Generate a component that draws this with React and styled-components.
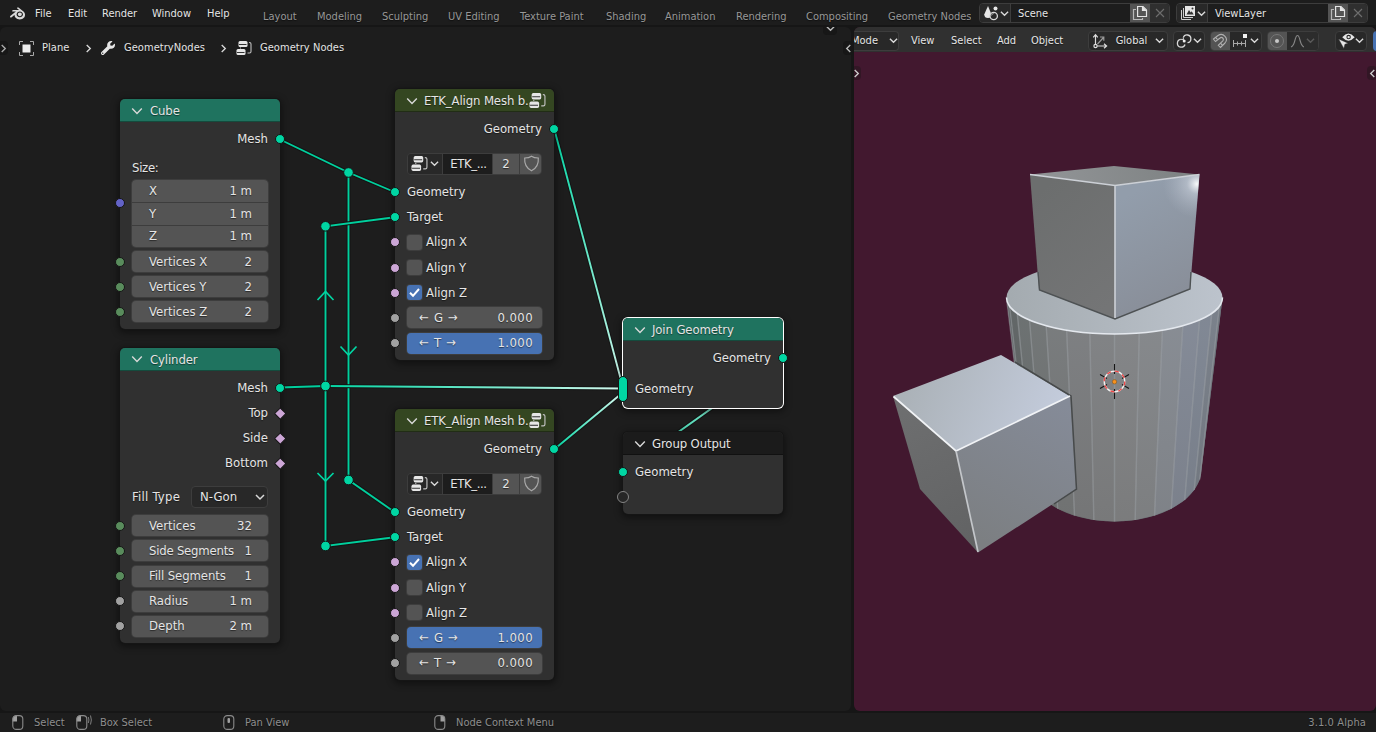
import React from "react";
import styled, { createGlobalStyle, css } from "styled-components";
import { SiBlender } from "react-icons/si";
import { FaWrench } from "react-icons/fa";

const C = {
  gap: "#161616",
  panel: "#1d1d1d",
  header: "#303030",
  node: "#303030",
  field: "#545454",
  menu: "#282828",
  outline: "#3d3d3d",
  blue: "#4772b3",
  text: "#e5e5e5",
  dim: "#989898",
  geo: "#00d6a3",
  int: "#598c5c",
  float: "#a1a1a1",
  bool: "#cca6d6",
  vector: "#6363c7",
  teal: "#1f735f",
  olive: "#344621",
  viewport: "#42182f",
};

const Global = createGlobalStyle`
  * { box-sizing: border-box; }
  body { margin: 0; background: ${C.gap}; overflow: hidden; }
  svg { display: block; flex: none; }
`;

const Window = styled.div`
  width: 1376px;
  height: 732px;
  display: flex;
  flex-direction: column;
  background: ${C.gap};
  color: ${C.text};
  font: 11px/14px "DejaVu Sans Condensed", "DejaVu Sans", sans-serif;
  font-stretch: condensed;
  white-space: nowrap;
  text-shadow: 0 1px 1px rgba(0, 0, 0, 0.5);
`;

/* ---------- top bar ---------- */
const TopBar = styled.header`
  height: 25px;
  flex: none;
  display: flex;
  background: ${C.panel};
  padding-left: 10px;
`;
const Logo = styled.div`
  width: 25px;
  padding-top: 6px;
`;
const MenuItem = styled.div`
  width: ${(p) => p.$w}px;
  padding-top: 7px;
`;
const Tabs = styled.nav`
  display: flex;
  width: 708px;
  overflow: hidden;
  color: ${C.dim};
`;
const Tab = styled.div`
  flex: none;
  width: ${(p) => p.$w}px;
  padding-top: 10px;
`;
const Selector = styled.div`
  display: flex;
  height: 20px;
  width: ${(p) => p.$w}px;
  margin: 3px 0 0 ${(p) => p.$gap}px;
  border: 1px solid ${C.outline};
  border-radius: 4px;
  overflow: hidden;
`;
const SelectorIcon = styled.div`
  width: 31px;
  display: flex;
  align-items: center;
  gap: 1px;
  padding-left: 3px;
  background: ${C.menu};
  border-right: 1px solid ${C.outline};
`;
const SelectorName = styled.div`
  flex: 1;
  padding: 3px 0 0 7px;
`;
const SelectorButton = styled.div`
  width: ${(p) => (p.$off ? 19 : 20)}px;
  display: flex;
  align-items: center;
  justify-content: center;
  background: ${(p) => (p.$off ? "#2f2f2f" : C.field)};
`;

/* ---------- main areas ---------- */
const Main = styled.main`
  height: 684px;
  margin-top: 2px;
  flex: none;
  display: flex;
  gap: 3px;
`;
const NodeEditor = styled.section`
  position: relative;
  width: 851px;
  background: ${C.panel};
  border-radius: 6px;
  overflow: hidden;
`;
const Breadcrumb = styled.div`
  position: relative;
  height: 42px;
  display: flex;
  align-items: center;
  padding-left: 19px;
`;
const Crumb = styled.div`
  display: flex;
  align-items: center;
  gap: ${(p) => p.$gap || 9}px;
  width: ${(p) => p.$w}px;
`;
const CrumbText = styled.span`
  letter-spacing: 0.05px;
`;
const CrumbArrow = styled.div`
  width: ${(p) => p.$w}px;
  margin-left: -1px;
  margin-right: 1px;
`;
const RegionTab = styled.div`
  position: absolute;
  left: ${(p) => p.$x}px;
  top: ${(p) => p.$y}px;
  width: ${(p) => p.$w || 10}px;
  height: ${(p) => p.$h || 14}px;
  display: flex;
  align-items: center;
  justify-content: center;
  background: ${(p) => (p.$clear ? "rgba(40,22,32,.6)" : "#171717")};
  border-radius: 4px;
`;

const Wires = styled.svg`
  position: absolute;
  left: 0;
  top: 0;
`;

/* ---------- nodes ---------- */
const NodeBox = styled.article`
  position: absolute;
  left: ${(p) => p.$x}px;
  top: ${(p) => p.$y}px;
  width: ${(p) => p.$w}px;
  height: ${(p) => p.$h}px;
  background: ${C.node};
  border-radius: 5px;
  box-shadow: 0 0 0 1px ${(p) => (p.$selected ? "#fff" : "#151515")}, 0 2px 7px 2px rgba(0, 0, 0, 0.42);
  font-size: 13px;
  line-height: 16px;
`;
const NodeHeader = styled.div`
  height: 23px;
  display: flex;
  align-items: center;
  background: ${(p) => p.$c};
  border-bottom: 1px solid rgba(0, 0, 0, 0.35);
  border-radius: 5px 5px 0 0;
  padding: 1px 8px 0 11px;
  gap: 6px;
`;
const NodeTitle = styled.span`
  flex: 1;
  padding-top: 1px;
  padding-left: ${(p) => p.$pl || 0}px;
  letter-spacing: -0.12px;
  ${(p) => p.$tight && css`margin-right: -9px;`}
`;
const NodeBody = styled.div`
  padding: ${(p) => p.$pt || 4.6}px 12px 0;
`;
const Row = styled.div`
  position: relative;
  height: ${(p) => p.$h || 25.2}px;
  margin-top: ${(p) => p.$mt || 0}px;
  display: flex;
  align-items: center;
  justify-content: ${(p) => (p.$right ? "flex-end" : "flex-start")};
`;
const RowLabel = styled.span`
  letter-spacing: ${(p) => p.$ls || 0}px;
`;
const Socket = styled.i`
  position: absolute;
  top: ${(p) => p.$top || "50%"};
  ${(p) => (p.$out ? "right: -17px;" : "left: -17px;")}
  width: 10px;
  height: 10px;
  margin-top: -5px;
  border-radius: 50%;
  border: 1px solid #151515;
  background: ${(p) => C[p.$t]};
  ${(p) => p.$t === "bool" && p.$out && css`
    border-radius: 1px;
    width: 8.5px;
    height: 8.5px;
    margin-top: -4.2px;
    right: -16.2px;
    transform: rotate(45deg);
  `}
  ${(p) => p.$hollow && css`
    width: 12px;
    height: 12px;
    margin-top: -6px;
    left: -18px;
    background: #262626;
    border: 1.5px solid #858585;
  `}
  ${(p) => p.$multi && css`
    height: 26px;
    margin-top: -13px;
    border-radius: 5px;
  `}
`;
const Field = styled.div`
  flex: 1;
  height: 21px;
  display: flex;
  justify-content: space-between;
  align-items: center;
  padding: 0 ${(p) => p.$pr || 16}px 0 ${(p) => p.$pl || 17}px;
  background: ${(p) => (p.$on ? C.blue : C.field)};
  border-radius: 4px;
  box-shadow: 0 0 0 1px ${C.outline};
`;
const VectorField = styled.div`
  width: 100%;
  height: 67px;
  display: flex;
  flex-direction: column;
  border-radius: 4px;
  overflow: hidden;
  box-shadow: 0 0 0 1px ${C.outline};
`;
const VectorPart = styled.div`
  flex: 1;
  display: flex;
  align-items: center;
  justify-content: space-between;
  padding: 0 16px 0 17px;
  background: ${C.field};
  & + & { border-top: 1px solid ${C.outline}; }
`;
const Dropdown = styled.div`
  margin-left: auto;
  width: 77px;
  height: 22px;
  display: flex;
  align-items: center;
  justify-content: space-between;
  padding: 0 2px 0 8px;
  background: ${C.menu};
  border: 1px solid ${C.outline};
  border-radius: 4px;
`;
const Check = styled.div`
  width: 15px;
  height: 15px;
  margin-right: 4px;
  border-radius: 3px;
  background: ${(p) => (p.$on ? C.blue : C.field)};
  box-shadow: 0 0 0 1px ${C.outline};
`;
const DataBlock = styled.div`
  flex: 1;
  height: 22px;
  display: flex;
  border: 1px solid ${C.outline};
  border-radius: 4px;
  overflow: hidden;
`;
const DataCell = styled.div`
  width: ${(p) => p.$w}px;
  flex: none;
  display: flex;
  align-items: center;
  justify-content: center;
  gap: 2px;
  padding-left: ${(p) => p.$pl || 0}px;
  letter-spacing: ${(p) => p.$ls || 0}px;
  background: ${(p) => p.$c};
  ${(p) => p.$line && css`border-right: 1px solid ${C.outline};`}
`;

/* ---------- viewport ---------- */
const Viewport = styled.section`
  position: relative;
  width: 522px;
  display: flex;
  flex-direction: column;
  background: ${C.viewport};
  border-radius: 6px;
  overflow: hidden;
`;
const ViewHeader = styled.div`
  height: 25px;
  flex: none;
  display: flex;
  align-items: center;
  background: ${C.header};
  padding-top: 2px;
`;
const HeadText = styled.div`
  width: ${(p) => p.$w}px;
  flex: none;
`;
const HeadBox = styled.div`
  width: ${(p) => p.$w}px;
  height: 20px;
  margin-right: ${(p) => p.$mr || 0}px;
  flex: none;
  display: flex;
  overflow: hidden;
  border: 1px solid ${C.outline};
  border-radius: 4px;
  background: ${C.menu};
  ${(p) => p.$first && css`
    border-left: 0;
    border-radius: 0 4px 4px 0;
    justify-content: flex-end;
  `}
`;
const HeadCell = styled.div`
  width: ${(p) => (p.$w ? p.$w + "px" : "auto")};
  ${(p) => (p.$w ? "flex: none;" : "flex: 1;")}
  display: flex;
  align-items: center;
  justify-content: space-between;
  padding: 0 ${(p) => p.$p ?? 3}px;
  background: ${(p) => p.$c || "transparent"};
`;
const BlueEdge = styled.div`
  width: 6px;
  height: 20px;
  flex: none;
  margin-left: 6px;
  background: ${C.blue};
  border-radius: 4px 0 0 4px;
`;

/* ---------- status bar ---------- */
const StatusBar = styled.footer`
  height: 19px;
  margin-top: 2px;
  display: flex;
  align-items: center;
  padding: 0 10px 0 12px;
  background: ${C.panel};
  color: #8e8e8e;
`;
const Hint = styled.div`
  display: flex;
  align-items: center;
  width: ${(p) => p.$w}px;
`;
const HintIcon = styled.div`
  width: ${(p) => p.$w}px;
`;
const Version = styled.div`
  margin-left: auto;
  letter-spacing: 0.12px;
`;

/* ---------- icons ---------- */
const Chevron = ({ dir = "down", s = 9, c = "#d8d8d8", w = 1.5 }) => {
  const d = {
    down: "M1 3 L5 7 L9 3",
    right: "M3 1 L7 5 L3 9",
    left: "M7 1 L3 5 L7 9",
  }[dir];
  return (
    <svg width={s} height={s} viewBox="0 0 10 10" fill="none" stroke={c} strokeWidth={w}>
      <path d={d} />
    </svg>
  );
};

const TreeIcon = ({ w = 16 }) => (
  <svg width={w} height={w} viewBox="0 0 16 16" fill="none">
    <rect x="2.5" y="1" width="9" height="6" rx="1.5" fill="#e6e6e6" />
    <path d="M3 4.5h7.5" stroke="#333" strokeWidth="1" />
    <rect x="0.5" y="9" width="9" height="6" rx="1.5" fill="#e6e6e6" />
    <path d="M1 12.5h7.5" stroke="#333" strokeWidth="1" />
    <path d="M13 2.5h.5q1.5 0 1.5 1.5v7.500q0 1.500-1.500 1.500h-2" stroke="#c0c0c0" strokeWidth="1.100" />
    <path d="M4.500 7.500v1" stroke="#c0c0c0" />
  </svg>
);

const ObjectIcon = () => (
  <svg width="15" height="15" viewBox="0 0 15 15" fill="none">
    <path d="M.5 4V.5H4M11 .5h3.500V4M14.500 11v3.500H11M4 14.500H.5V11" stroke="#a8a8a8" />
    <rect x="3.500" y="3.500" width="8" height="8" fill="#ececec" />
  </svg>
);

const SceneIcon = () => (
  <svg width="16" height="16" viewBox="0 0 16 16">
    <path d="M5 1 L8.500 9.500 Q8.500 13 5 13 T1.200 9.500Z" fill="#e6e6e6" />
    <circle cx="12.500" cy="3.500" r="2" fill="#e6e6e6" />
    <circle cx="10.700" cy="11" r="3.700" fill="#282828" stroke="#d8d8d8" strokeWidth="1.300" />
    <path d="M8.500 10.500q.4-2 2.300-2" stroke="#bbb" fill="none" strokeWidth=".8" />
  </svg>
);

const LayersIcon = () => (
  <svg width="16" height="16" viewBox="0 0 16 16" fill="none">
    <path d="M1.500 5v9.500H11M3.500 3v9.500H13" stroke="#d0d0d0" />
    <rect x="5" y="1" width="10" height="10" fill="#e6e6e6" />
    <path d="M6.500 9.500 9 5l1.700 2.500 1-1.200 2 3.200z" fill="#333" />
    <circle cx="12.500" cy="3.500" r="1" fill="#333" />
  </svg>
);

const CopyIcon = () => (
  <svg width="16" height="16" viewBox="0 0 16 16" fill="none" stroke="#e4e4e4" strokeWidth="1.200">
    <path d="M4 4.500H1.500v10h9V13" stroke="#b8b8b8" />
    <path d="M5.600 1.500h5.400l3.500 3.500v6.500H5.600z" />
    <path d="M10.500 1.500V5.500H14.500" fill="#e4e4e4" />
  </svg>
);

const CloseIcon = () => (
  <svg width="10" height="10" viewBox="0 0 10 10" stroke="#6d6d6d" strokeWidth="1.100">
    <path d="M1 1l8 8M9 1l-8 8" />
  </svg>
);

const ShieldIcon = () => (
  <svg width="17" height="17" viewBox="0 0 17 17" fill="none" stroke="#a8a8a8" strokeWidth="1.200">
    <path d="M8.500 1.200 Q11 3 15.300 3 Q16 12 8.500 15.800 Q1 12 1.700 3 Q6 3 8.500 1.200Z" />
  </svg>
);

const AxesIcon = () => (
  <svg width="16" height="16" viewBox="0 0 16 16" fill="none" stroke="#dcdcdc" strokeWidth="1.200">
    <path d="M3.500 11.500V2M1.200 4.300 3.500 1.700l2.300 2.600M5 13h9.500M12 10.700l2.600 2.300-2.600 2.300" />
    <circle cx="3.500" cy="13" r="1.600" />
    <path d="M5.500 11 11.500 4.500M8 4h3.800v3.800" stroke="#9a9a9a" />
  </svg>
);

const PivotIcon = () => (
  <svg width="16" height="16" viewBox="0 0 16 16" fill="none" stroke="#d8d8d8" strokeWidth="1.300">
    <path d="M4.800 6.400A3.900 3.900 0 1 0 9 11.500M11.500 9.700A3.900 3.900 0 1 0 7.300 4.500" />
    <path d="M7.300 4.500Q6.800 7.500 8.500 9M4.800 6.400Q6 6 7.500 7" strokeWidth="1" />
    <circle cx="8.200" cy="8" r="1.500" fill="#ededed" stroke="none" />
  </svg>
);

const MagnetIcon = () => (
  <svg width="16" height="16" viewBox="0 0 16 16" fill="none" stroke="#b0b0b0" strokeWidth="1.100">
    <path d="M1.500 6 6 2.500Q10 0 13 3.300T13 10L8.500 14.500 6.300 12.300 10.800 7.800Q12 6.300 10.700 5T8 5L3.500 8.500Z" />
    <path d="M3.500 4.300 5.700 6.700M8.400 10.200l2.300 2.300" />
  </svg>
);

const SnapIcon = () => (
  <svg width="16" height="16" viewBox="0 0 16 16" fill="none" stroke="#a8a8a8">
    <path d="M1.500 7v7M13.500 7v7M1.500 10.500H14M5.500 8.500v4M9.500 8.500v4" />
    <rect x="11" y="1" width="4" height="4" fill="#f0f0f0" stroke="none" />
  </svg>
);

const ProportionalIcon = () => (
  <svg width="16" height="16" viewBox="0 0 16 16" fill="none">
    <circle cx="8" cy="8" r="6.500" stroke="#777" />
    <circle cx="8" cy="8" r="2" fill="#c8c8c8" />
  </svg>
);

const FalloffIcon = () => (
  <svg width="15" height="14" viewBox="0 0 15 14" fill="none" stroke="#858585" strokeWidth="1.200">
    <path d="M1 13C5.500 12 4.500 1.500 7.500 1.500S9.500 12 14 13" />
  </svg>
);

const VisibilityIcon = () => (
  <svg width="17" height="17" viewBox="0 0 16 16" fill="none">
    <path d="M4 5Q9.800-2 15.700 5 9.800 11.500 4 5Z" fill="#e6e6e6" />
    <circle cx="10" cy="4.800" r="2.100" fill="#282828" />
    <circle cx="10" cy="4.800" r="1.100" fill="#e6e6e6" />
    <path d="M.5 6.500 9.500 10.500 6.500 11.500 5.500 15.500Z" fill="#e6e6e6" stroke="#282828" strokeWidth=".4" />
  </svg>
);

const CheckMark = () => (
  <svg width="15" height="15" viewBox="0 0 15 15" fill="none" stroke="#fff" strokeWidth="2">
    <path d="M3 7.800 6 10.800 12 4" />
  </svg>
);

const MouseIcon = ({ button, drag }) => (
  <svg width="17" height="15" viewBox="0 0 17 15" fill="none" stroke="#8a8a8a" strokeWidth="1.100">
    {button === "left" && <path d="M.6 6.500V4Q.6.6 5 .6V6.500Z" fill="#a0a0a0" stroke="none" />}
    {button === "right" && <path d="M11 6.500V4Q11 .6 6.500.6V6.500Z" fill="#a0a0a0" stroke="none" />}
    {button === "middle" && <rect x="4.500" y="3" width="2.500" height="5" rx="1" fill="#a0a0a0" stroke="none" />}
    <rect x=".8" y=".6" width="10" height="13.800" rx="3.500" />
    {drag && <path d="M12.300 2q1.300 3 0 6M14.500.500q1.700 4.500 0 9" strokeWidth=".9" />}
  </svg>
);

/* ---------- composed parts ---------- */
const Output = ({ label, t = "geo", mt, h }) => (
  <Row $right $mt={mt} $h={h}>
    <RowLabel>{label}</RowLabel>
    <Socket $out $t={t} />
  </Row>
);
const Input = ({ label, t = "geo", mt, h, multi, hollow }) => (
  <Row $mt={mt} $h={h}>
    <Socket $t={t} $multi={multi} $hollow={hollow} />
    <RowLabel>{label}</RowLabel>
  </Row>
);
const NumberRow = ({ label, value, t = "int", mt, ls }) => (
  <Row $mt={mt}>
    <Socket $t={t} />
    <Field>
      <RowLabel $ls={ls}>{label}</RowLabel>
      <span>{value}</span>
    </Field>
  </Row>
);
const BoolRow = ({ label, on }) => (
  <Row>
    <Socket $t="bool" />
    <Check $on={on}>{on && <CheckMark />}</Check>
    <RowLabel>{label}</RowLabel>
  </Row>
);
const Node = ({ title, titlePad, color, icon, pt, children, ...box }) => (
  <NodeBox {...box}>
    <NodeHeader $c={color}>
      <Chevron s={12} w={1.2} />
      <NodeTitle $tight={!!icon} $pl={titlePad}>{title}</NodeTitle>
      {icon}
    </NodeHeader>
    <NodeBody $pt={pt}>{children}</NodeBody>
  </NodeBox>
);

const AlignNode = ({ y, checked, g, t }) => (
  <Node title="ETK_Align Mesh b." color={C.olive} icon={<TreeIcon w={17} />} $x={395} $y={y} $w={159} $h={271}>
    <Output label="Geometry" />
    <Row $mt={9.2}>
      <DataBlock>
        <DataCell $w={35} $c={C.menu} $line>
          <TreeIcon w={17} />
          <Chevron s={9} />
        </DataCell>
        <DataCell $w={50} $pl={2} $ls={-0.4} $c={C.panel} $line>ETK_...</DataCell>
        <DataCell $w={27} $c={C.field} $line>2</DataCell>
        <DataCell $w={22} $c={C.field}><ShieldIcon /></DataCell>
      </DataBlock>
    </Row>
    <Input label="Geometry" mt={3.2} />
    <Input label="Target" />
    {["X", "Y", "Z"].map((a) => (
      <BoolRow key={a} label={`Align ${a}`} on={checked === a} />
    ))}
    {[["← G →", g], ["← T →", t]].map(([label, v]) => (
      <Row key={label}>
        <Socket $t="float" />
        <Field $on={v > 0} $pl={12} $pr={9}>
          <RowLabel $ls={0.7}>{label}</RowLabel>
          <RowLabel $ls={0.4}>{v.toFixed(3)}</RowLabel>
        </Field>
      </Row>
    ))}
  </Node>
);

const WIRES = [
  { d: "M280 112.500 L348.500 145.500 L394.500 165" },
  { d: "M348.500 145.500 V453 L394.500 485" },
  { d: "M394.500 190.300 L325.500 199.300 V519 L394.500 510.300" },
  { d: "M280 360.500 L325.500 359" },
  { d: "M325.500 359 L622 361.500", g: "wa" },
  { d: "M554.300 102.300 L621 353", g: "wb" },
  { d: "M554.300 422.300 L621 367", g: "wc" },
  { d: "M783 330.500 L623 444.500", g: "wd" },
];
const grad = (id, x1, y1, x2, y2, a, b) => (
  <linearGradient id={id} gradientUnits="userSpaceOnUse" x1={x1} y1={y1} x2={x2} y2={y2}>
    <stop offset="0" stopColor={a} />
    <stop offset="1" stopColor={b} />
  </linearGradient>
);

const NodeWires = () => (
  <Wires width="851" height="684" fill="none">
    <defs>
      {grad("wa", 325, 0, 622, 0, C.geo, "#d2f9ee")}
      {grad("wb", 0, 102, 0, 353, C.geo, "#ccf7eb")}
      {grad("wc", 554, 0, 621, 0, C.geo, "#d8faf0")}
      {grad("wd", 783, 0, 623, 0, "#d8faf0", "#00c493")}
    </defs>
    {WIRES.map((w) => (
      <g key={w.d}>
        <path d={w.d} stroke="#141414" strokeWidth="4" />
        <path d={w.d} stroke={w.g ? `url(#${w.g})` : "#00cf9d"} strokeWidth="1.900" />
      </g>
    ))}
    <g stroke={C.geo} strokeWidth="1.700">
      <path d="M317.500 273 L325.500 264.500 L333.500 273" />
      <path d="M340.500 319.500 L348.500 328 L356.500 319.500" />
      <path d="M317.500 446 L325.500 454 L333.500 446" />
    </g>
    {[[348.5, 145.5], [325.5, 199.300], [325.5, 359], [348.5, 453], [325.5, 519]].map(([x, y]) => (
      <circle key={`${x}-${y}`} cx={x} cy={y} r="4.800" fill={C.geo} stroke="#151515" />
    ))}
  </Wires>
);

/* projected rim point of the cylinder for the k-th of 32 segments */
const rim = (k, cx, cy, rx, ry, e) => {
  const a = (k * Math.PI) / 16;
  const dx = (rx * Math.sqrt(1 - e * e) * Math.sin(a)) / (1 - e * Math.cos(a));
  const q = Math.max(0, 1 - (dx / rx) ** 2);
  return [cx + dx, cy + ry * Math.sqrt(q)];
};
const FACET = {
  "-7": "#55595a", "-6": "#5c605f", "-5": "#686c6b", "-4": "#6f7271", "-3": "#767878",
  "-2": "#7b7c7d", "-1": "#7f8081", 0: "#828384", 1: "#848688", 2: "#868a90",
  3: "#828894", 4: "#7e8591", 5: "#777d86", 6: "#6a6f76",
};
const BODY = "M1006.500 297.500 L1027.500 469 A87 52.500 0 0 0 1201.500 469 L1222.500 297.500Z";

const Scene3D = () => {
  const ks = Object.keys(FACET).map(Number).sort((a, b) => a - b);
  const top = (k) => rim(k, 1114.5, 297.5, 108, 36.5, 0.16);
  const bot = (k) => rim(k, 1114.5, 469, 87, 52.5, 0.2);
  return (
    <svg width="522" height="659" viewBox="854 52 522 659">
      <defs>
        {grad("cylTop", 1010, 0, 1220, 0, "#a4abb0", "#bcc3cc")}
        {grad("cyl", 1006, 0, 1222, 0, "#5f6362", "#6f757e")}
        {grad("cubeL", 1030, 200, 1115, 300, "#6c6e6e", "#747576")}
        {grad("cubeR", 1120, 200, 1180, 310, "#929dab", "#888d97")}
        {grad("cubeT", 1060, 185, 1180, 166, "#8f9294", "#7f8384")}
        {grad("boxT", 910, 380, 1050, 430, "#abb2b8", "#c3cbdb")}
        {grad("boxL", 900, 400, 970, 540, "#6e6f70", "#626364")}
        {grad("boxR", 1060, 400, 980, 540, "#858b98", "#7c7f82")}
        {grad("shade", 0, 330, 0, 520, "rgba(150,160,175,.1)", "rgba(60,60,60,.1)")}
        <radialGradient id="glow" gradientUnits="userSpaceOnUse" cx="1197" cy="184" r="34">
          <stop offset="0" stopColor="#fff" stopOpacity=".95" />
          <stop offset=".3" stopColor="#dfe5ef" stopOpacity=".4" />
          <stop offset="1" stopColor="#c0c6d4" stopOpacity="0" />
        </radialGradient>
      </defs>
      <path d={BODY} fill="url(#cyl)" />
      {ks.map((k) => {
        const [a, b, c, d] = [top(k), top(k + 1), bot(k + 1), bot(k)];
        return <path key={k} d={`M${a} L${b} L${c} L${d}Z`} fill={FACET[k]} />;
      })}
      <path d={BODY} fill="url(#shade)" />
      {ks.map((k) => (
        <path key={k} d={`M${top(k)} L${bot(k)}`} stroke="#a3a8ae" strokeOpacity=".45" strokeWidth="1.400" />
      ))}
      <ellipse cx="1114.500" cy="297.500" rx="108" ry="36.500" fill="url(#cylTop)" />
      <path d="M1006.500 297.500 A108 36.500 0 0 0 1222.500 297.500" fill="none" stroke="#e4e8ee" strokeWidth="1.500" />
      <path d="M1030 174.500 L1115 185.500 V319 L1039 290Z" fill="url(#cubeL)" />
      <path d="M1199.500 174.500 L1115 185.500 V319 L1190 289Z" fill="url(#cubeR)" />
      <path d="M1199.500 174.500 L1115 185.500 V319 L1190 289Z" fill="url(#glow)" />
      <path d="M1030 174.500 L1114 166 L1199.500 174.500 L1115 185.500Z" fill="url(#cubeT)" />
      <path d="M1038 272 L1039.500 290 L1115 319 L1190 289 L1191 272" fill="none" stroke="#4e5254" strokeWidth="1.400" />
      <path d="M1030 174.500 L1115 185.500 L1199.500 174.500M1115 185.500V318" fill="none" stroke="#ccd0d6" strokeWidth="1.600" />
      <path d="M893 396 L956 451 L978 552.500 L920 489Z" fill="url(#boxL)" />
      <path d="M956 451 L1070 396 L1076 489 L978 552.500Z" fill="url(#boxR)" />
      <path d="M893 396 L1001 355 L1070 396 L956 451Z" fill="url(#boxT)" />
      <path d="M1015 362 L1071 396 L1076.500 489 L1054 504" fill="none" stroke="#474a4b" strokeWidth="1.500" />
      <path d="M893.500 396.500 L956 451 L1070 396" fill="none" stroke="#f1f3f6" strokeWidth="1.700" />
      <path d="M956 451 L978 552" stroke="#c3c6ca" strokeWidth="1.700" />
      <g fill="none">
        <path d="M1114.500 364v10M1114.500 389v10M1100 374.500l7 4M1122 384.500l7 4M1129 374.500l-7 4M1107 384.500l-7 4" stroke="#161616" strokeWidth="1.100" />
        <circle cx="1114.500" cy="381.500" r="10.300" stroke="#f2f2f2" strokeWidth="1.300" />
        <circle cx="1114.500" cy="381.500" r="10.300" stroke="#ee4545" strokeWidth="1.300" strokeDasharray="4.045" />
        <circle cx="1114.500" cy="381.800" r="2.200" fill="#f7921e" stroke="#7a4a14" strokeWidth=".5" />
      </g>
    </svg>
  );
};

const TABS = [
  ["Layout", 54], ["Modeling", 65], ["Sculpting", 66], ["UV Editing", 72], ["Texture Paint", 86],
  ["Shading", 59], ["Animation", 71], ["Rendering", 70], ["Compositing", 82], ["Geometry Nodes", 90],
];

const DataSelector = ({ icon, name, w, gap }) => (
  <Selector $w={w} $gap={gap}>
    <SelectorIcon>{icon}<Chevron s={9} /></SelectorIcon>
    <SelectorName>{name}</SelectorName>
    <SelectorButton><CopyIcon /></SelectorButton>
    <SelectorButton $off><CloseIcon /></SelectorButton>
  </Selector>
);

export default function App() {
  return (
    <Window>
      <Global />
      <TopBar>
        <Logo><SiBlender size={15} color="#d9d9d9" /></Logo>
        <MenuItem $w={33}>File</MenuItem>
        <MenuItem $w={34}>Edit</MenuItem>
        <MenuItem $w={50}>Render</MenuItem>
        <MenuItem $w={55}>Window</MenuItem>
        <MenuItem $w={56}>Help</MenuItem>
        <Tabs>
          {TABS.map(([t, w]) => <Tab key={t} $w={w}>{t}</Tab>)}
        </Tabs>
        <DataSelector icon={<SceneIcon />} name="Scene" w={191} gap={8} />
        <DataSelector icon={<LayersIcon />} name="ViewLayer" w={192} gap={6} />
      </TopBar>

      <Main>
        <NodeEditor>
          <Breadcrumb>
            <Crumb $w={66} $gap={8}><ObjectIcon /><CrumbText>Plane</CrumbText></Crumb>
            <CrumbArrow $w={16}><Chevron dir="right" /></CrumbArrow>
            <Crumb $w={119}><FaWrench size={14} color="#e6e6e6" /><CrumbText>GeometryNodes</CrumbText></Crumb>
            <CrumbArrow $w={16}><Chevron dir="right" /></CrumbArrow>
            <Crumb $gap={8}><TreeIcon w={16} /><CrumbText>Geometry Nodes</CrumbText></Crumb>
          </Breadcrumb>
          <RegionTab $x={-2} $y={14}><Chevron dir="right" c="#aaa" /></RegionTab>
          <RegionTab $x={823} $y={-5} $w={14} $h={13}><Chevron c="#bbb" /></RegionTab>
          <RegionTab $x={843} $y={14}><Chevron dir="left" c="#bbb" /></RegionTab>

          <NodeWires />

          <Node title="Cube" titlePad={1} color={C.teal} $x={120} $y={72} $w={160} $h={229.500}>
            <Output label="Mesh" />
            <Row $mt={3.2}><RowLabel $ls={-0.3}>Size:</RowLabel></Row>
            <Row $h={67}>
              <Socket $t="vector" $top="22.5px" />
              <VectorField>
                {["X", "Y", "Z"].map((a) => (
                  <VectorPart key={a}><span>{a}</span><span>1 m</span></VectorPart>
                ))}
              </VectorField>
            </Row>
            <NumberRow label="Vertices X" value="2" mt={1.800} />
            <NumberRow label="Vertices Y" value="2" />
            <NumberRow label="Vertices Z" value="2" />
          </Node>

          <Node title="Cylinder" titlePad={1} color={C.teal} $x={120} $y={320.500} $w={160} $h={295}>
            <Output label="Mesh" />
            <Output label="Top" t="bool" />
            <Output label="Side" t="bool" />
            <Output label="Bottom" t="bool" />
            <Row $mt={9}>
              <RowLabel $ls={0.25}>Fill Type</RowLabel>
              <Dropdown>N-Gon<Chevron s={10} /></Dropdown>
            </Row>
            <NumberRow label="Vertices" value="32" mt={3} />
            <NumberRow label="Side Segments" value="1" ls={-0.22} />
            <NumberRow label="Fill Segments" value="1" ls={-0.1} />
            <NumberRow label="Radius" value="1 m" t="float" />
            <NumberRow label="Depth" value="2 m" t="float" />
          </Node>

          <AlignNode y={62} checked="Z" g={0} t={1} />
          <AlignNode y={382} checked="X" g={1} t={0} />

          <Node title="Group Output" color="#1b1b1b" pt={4} $x={623} $y={405} $w={160} $h={82}>
            <Input label="Geometry" />
            <Input label="" hollow />
          </Node>
          <Node title="Join Geometry" color={C.teal} pt={4} $selected $x={623} $y={291} $w={160} $h={90}>
            <Output label="Geometry" />
            <Input label="Geometry" mt={6} multi />
          </Node>
        </NodeEditor>

        <Viewport>
          <ViewHeader>
            <HeadBox $w={45} $mr={12} $first>
              <HeadCell $w={47} $p={0}><HeadText $w={36}>Mode</HeadText><Chevron s={9} /></HeadCell>
            </HeadBox>
            <HeadText $w={40}>View</HeadText>
            <HeadText $w={46}>Select</HeadText>
            <HeadText $w={34}>Add</HeadText>
            <HeadText $w={57}>Object</HeadText>
            <HeadBox $w={80} $mr={5}><HeadCell><AxesIcon />Global<Chevron s={9} /></HeadCell></HeadBox>
            <HeadBox $w={32} $mr={5}><HeadCell $p={2}><PivotIcon /><Chevron s={9} /></HeadCell></HeadBox>
            <HeadBox $w={52} $mr={5}>
              <HeadCell $w={19} $p={1} $c={C.field}><MagnetIcon /></HeadCell>
              <HeadCell $p={2}><SnapIcon /><Chevron s={9} /></HeadCell>
            </HeadBox>
            <HeadBox $w={52} $mr={16}>
              <HeadCell $w={19} $p={1} $c={C.field}><ProportionalIcon /></HeadCell>
              <HeadCell $c="#2c2c2c"><FalloffIcon /><Chevron s={9} c="#5a5a5a" /></HeadCell>
            </HeadBox>
            <HeadBox $w={32}><HeadCell $p={2}><VisibilityIcon /><Chevron s={9} /></HeadCell></HeadBox>
            <BlueEdge />
          </ViewHeader>
          <Scene3D />
          <RegionTab $x={-3} $y={39} $clear><Chevron dir="right" c="#ccc" /></RegionTab>
          <RegionTab $x={513} $y={39} $clear><Chevron dir="left" c="#ccc" /></RegionTab>
        </Viewport>
      </Main>

      <StatusBar>
        <Hint $w={64}><HintIcon $w={22}><MouseIcon button="left" /></HintIcon>Select</Hint>
        <Hint $w={147}><HintIcon $w={24}><MouseIcon button="left" drag /></HintIcon>Box Select</Hint>
        <Hint $w={211}><HintIcon $w={22}><MouseIcon button="middle" /></HintIcon>Pan View</Hint>
        <Hint><HintIcon $w={22}><MouseIcon button="right" /></HintIcon>Node Context Menu</Hint>
        <Version>3.1.0 Alpha</Version>
      </StatusBar>
    </Window>
  );
}
